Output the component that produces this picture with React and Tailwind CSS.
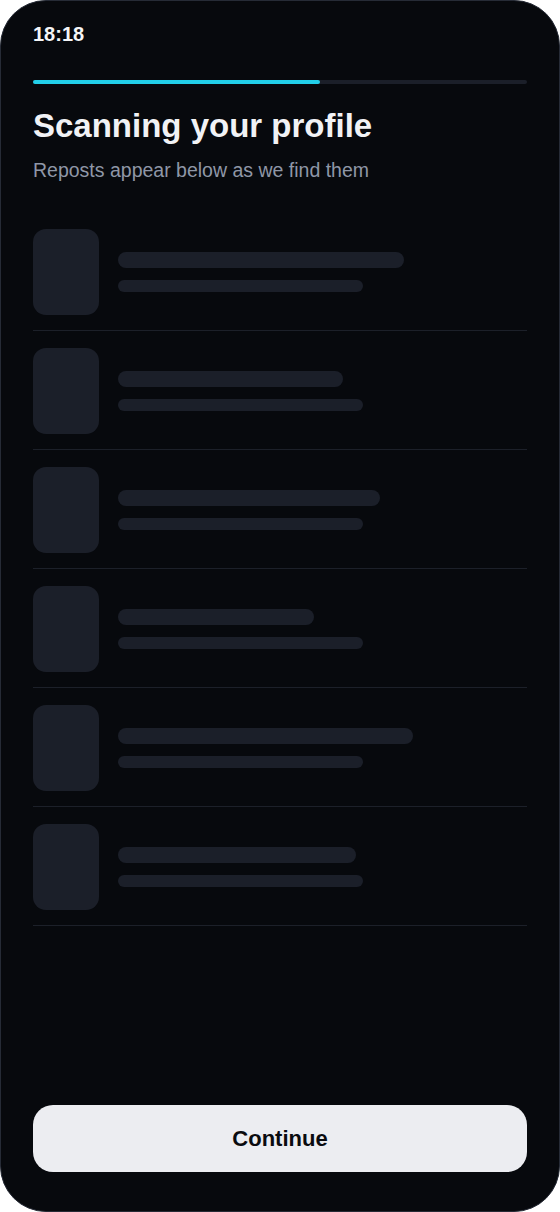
const rows = [286, 225, 262, 196, 295, 238];

function SkeletonRow({ width }) {
  return (
    <li className="flex items-center gap-[19px] border-b border-[#1c2029] pb-[15px] pt-[17px]">
      <div className="h-[86px] w-[66px] shrink-0 rounded-[13px] bg-[#1b1f29]" />
      <div className="flex flex-1 flex-col gap-3">
        <div className="h-4 rounded-full bg-[#1b1f29]" style={{ width }} />
        <div className="h-3 w-[245px] rounded-full bg-[#1b1f29]" />
      </div>
    </li>
  );
}

export default function App() {
  return (
    <div className="min-h-[1212px] w-[560px] bg-white" style={{ fontFamily: '"Liberation Sans", Arial, sans-serif' }}>
      <div className="flex h-[1212px] w-[560px] flex-col rounded-[46px] border border-[#262b36] bg-[#07090d] px-[32px] pb-[39px] pt-[21px]">
        <p className="text-[20px] font-bold leading-6 text-[#f4f5f7]">18:18</p>

        <div className="mt-[34px] h-[4px] w-full rounded-full bg-[#1b1f29]">
          <div className="h-full w-[58%] rounded-full bg-[#22cfe9]" />
        </div>

        <h1 className="mt-[22px] text-[33px] font-bold leading-10 text-[#f1f2f5]">Scanning your profile</h1>
        <p className="mt-[11px] text-[19.5px] leading-[26px] text-[#8f97a7]">Reposts appear below as we find them</p>

        <ul className="mt-[29px]">
          {rows.map((w, i) => (
            <SkeletonRow key={i} width={w} />
          ))}
        </ul>

        <div className="flex-1" />

        <button className="h-[67px] w-full rounded-[20px] bg-[#ecedf1] text-[22px] font-bold text-[#0a0b0f]">
          Continue
        </button>
      </div>
    </div>
  );
}
